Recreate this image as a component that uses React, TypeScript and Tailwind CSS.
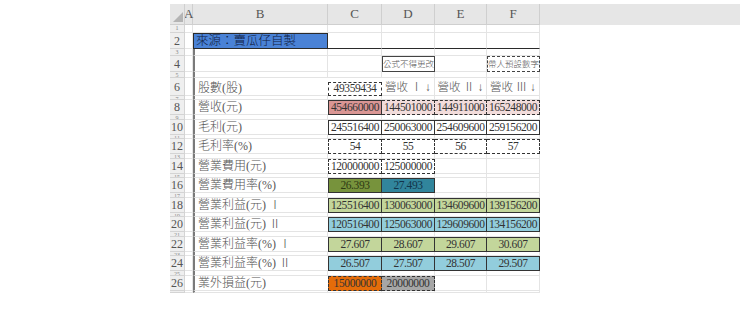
import clsx from "clsx";

type Cell = {
  text: string;
  bg?: string;
  dashed?: boolean;
  color?: string;
};

type DataRow = {
  n: number;
  label: string;
  cells: Cell[];
};

const ROWS: DataRow[] = [
  {
    n: 8,
    label: "營收(元)",
    cells: [
      { text: "454660000", bg: "bg-[#da9694]" },
      { text: "144501000", bg: "bg-[#f2dcdb]", dashed: true },
      { text: "144911000", bg: "bg-[#f2dcdb]", dashed: true },
      { text: "165248000", bg: "bg-[#f2dcdb]", dashed: true },
    ],
  },
  {
    n: 10,
    label: "毛利(元)",
    cells: [
      { text: "245516400" },
      { text: "250063000" },
      { text: "254609600" },
      { text: "259156200" },
    ],
  },
  {
    n: 12,
    label: "毛利率(%)",
    cells: [
      { text: "54", dashed: true },
      { text: "55", dashed: true },
      { text: "56", dashed: true },
      { text: "57", dashed: true },
    ],
  },
  {
    n: 14,
    label: "營業費用(元)",
    cells: [
      { text: "120000000", dashed: true },
      { text: "125000000", dashed: true },
    ],
  },
  {
    n: 16,
    label: "營業費用率(%)",
    cells: [
      { text: "26.393", bg: "bg-[#77933c]", color: "text-[#2e3a14]" },
      { text: "27.493", bg: "bg-[#31859c]", color: "text-[#12344a]" },
    ],
  },
  {
    n: 18,
    label: "營業利益(元) Ⅰ",
    cells: [
      { text: "125516400", bg: "bg-[#c3d69b]" },
      { text: "130063000", bg: "bg-[#c3d69b]" },
      { text: "134609600", bg: "bg-[#c3d69b]" },
      { text: "139156200", bg: "bg-[#c3d69b]" },
    ],
  },
  {
    n: 20,
    label: "營業利益(元) Ⅱ",
    cells: [
      { text: "120516400", bg: "bg-[#92cddc]" },
      { text: "125063000", bg: "bg-[#92cddc]" },
      { text: "129609600", bg: "bg-[#92cddc]" },
      { text: "134156200", bg: "bg-[#92cddc]" },
    ],
  },
  {
    n: 22,
    label: "營業利益率(%) Ⅰ",
    cells: [
      { text: "27.607", bg: "bg-[#c3d69b]" },
      { text: "28.607", bg: "bg-[#c3d69b]" },
      { text: "29.607", bg: "bg-[#c3d69b]" },
      { text: "30.607", bg: "bg-[#c3d69b]" },
    ],
  },
  {
    n: 24,
    label: "營業利益率(%) Ⅱ",
    cells: [
      { text: "26.507", bg: "bg-[#92cddc]" },
      { text: "27.507", bg: "bg-[#92cddc]" },
      { text: "28.507", bg: "bg-[#92cddc]" },
      { text: "29.507", bg: "bg-[#92cddc]" },
    ],
  },
  {
    n: 26,
    label: "業外損益(元)",
    cells: [
      { text: "15000000", bg: "bg-[#e46c0a]", dashed: true },
      { text: "20000000", bg: "bg-[#a6a6a6]", dashed: true },
    ],
  },
];

// odd spacer rows after each data row (alternating 5px / 4px)
const GAP_AFTER: Record<number, string> = {
  8: "h-[5px]",
  10: "h-[4px]",
  12: "h-[5px]",
  14: "h-[4px]",
  16: "h-[5px]",
  18: "h-[4px]",
  20: "h-[5px]",
  22: "h-[4px]",
  24: "h-[5px]",
  26: "h-[2px]",
};

const VALUE_W = ["w-[54px]", "w-[53px]", "w-[52px]", "w-[53px]"];

function RowHead({ n, small }: { n?: number; small?: boolean }) {
  return (
    <div
      className={clsx(
        "flex w-[15px] shrink-0 justify-center overflow-hidden border-r border-b border-[#d4d4d4] bg-[#efefef] leading-none text-[#555]",
        small ? "items-start text-[6px] text-[#888]" : "items-center text-[12px]",
      )}
    >
      {n}
    </div>
  );
}

function Grid({ w, className }: { w: string; className?: string }) {
  return <div className={clsx(w, "shrink-0 border-r border-b border-[#e4e4e4]", className)} />;
}

function Spacer({ n, h }: { n: number; h: string }) {
  return (
    <div className={clsx("flex", h)}>
      <RowHead n={n} small />
      <Grid w="w-[8px]" />
      <Grid w="w-[135px]" className="border-l-2 border-l-[#7a7a7a]" />
      {VALUE_W.map((w, i) => (
        <Grid key={i} w={w} />
      ))}
    </div>
  );
}

function ValueBox({ cell, first, w }: { cell?: Cell; first: boolean; w: string }) {
  if (!cell) return <Grid w={w} />;
  return (
    <div
      className={clsx(
        w,
        "flex shrink-0 items-center justify-center border-y border-r border-[#333] text-[11.5px] leading-none tracking-[-0.4px]",
        first && "border-l",
        cell.dashed && "border-dashed",
        cell.bg ?? "bg-white",
        cell.color ?? "text-[#333]",
      )}
    >
      {cell.text}
    </div>
  );
}

export default function App() {
  return (
    <div className="min-h-[315px] bg-white pt-[4px] pl-[170px] font-['Liberation_Serif','Noto_Sans_CJK_TC',serif] text-[#555]">
      {/* column header */}
      <div className="flex h-[21px] bg-[#e6e6e6] text-[13px] text-[#555]">
        <div className="relative w-[15px] shrink-0 border-r border-b border-[#cfcfcf]">
          <svg className="absolute right-[1px] bottom-[2px]" width="10" height="10" viewBox="0 0 10 10">
            <polygon points="10,0 10,10 0,10" fill="#b4b4b4" />
          </svg>
        </div>
        <div className="flex w-[8px] shrink-0 items-center overflow-visible border-r border-b border-[#cfcfcf]">
          <span className="-ml-[1px]">A</span>
        </div>
        {[
          ["B", "w-[135px]"],
          ["C", "w-[54px]"],
          ["D", "w-[53px]"],
          ["E", "w-[52px]"],
          ["F", "w-[53px]"],
        ].map(([l, w]) => (
          <div
            key={l}
            className={clsx(w, "flex shrink-0 items-center justify-center border-r border-b border-[#cfcfcf]")}
          >
            {l}
          </div>
        ))}
      </div>

      {/* row 1 */}
      <div className="flex h-[8px]">
        <RowHead n={1} small />
        <Grid w="w-[8px]" />
        <Grid w="w-[135px]" />
        {VALUE_W.map((w, i) => (
          <Grid key={i} w={w} />
        ))}
      </div>

      {/* row 2 */}
      <div className="flex h-[16px]">
        <RowHead n={2} />
        <Grid w="w-[8px]" />
        <div className="flex w-[135px] shrink-0 items-center border border-[#2a2a2a] bg-[#4a82d6] pl-[2px] text-[12.5px] leading-none font-light text-[#10203f]">
          來源：賣瓜仔自製
        </div>
        {VALUE_W.map((w, i) => (
          <div key={i} className={clsx(w, "shrink-0 border-r border-r-[#e4e4e4] border-b border-b-[#2a2a2a]")} />
        ))}
      </div>

      <Spacer n={3} h="h-[7px]" />

      {/* row 4 */}
      <div className="flex h-[16px]">
        <RowHead n={4} />
        <Grid w="w-[8px]" />
        <Grid w="w-[135px]" className="border-l-2 border-l-[#7a7a7a]" />
        <Grid w="w-[54px]" />
        <div className="flex w-[53px] shrink-0 items-center justify-center border border-[#444] text-[8.5px] leading-none font-light text-[#555]">
          公式不得更改
        </div>
        <Grid w="w-[52px]" />
        <div className="flex w-[53px] shrink-0 items-center justify-center border border-dashed border-[#444] text-[8.5px] leading-none font-light text-[#555]">
          帶人預設數字
        </div>
      </div>

      <Spacer n={5} h="h-[6px]" />

      {/* row 6 */}
      <div className="flex h-[18px]">
        <RowHead n={6} />
        <Grid w="w-[8px]" />
        <div className="flex w-[135px] shrink-0 items-center border-b border-l-2 border-[#e4e4e4] border-l-[#7a7a7a] pt-[3px] pl-[3px] text-[12px] leading-none font-light">
          股數(股)
        </div>
        <div className="flex w-[54px] shrink-0 items-end">
          <div className="flex h-[14px] w-full items-center justify-center border border-dashed border-[#333] text-[11.5px] leading-none tracking-[-0.4px] text-[#333]">
            49359434
          </div>
        </div>
        {[
          ["營收 Ⅰ ↓", "w-[53px]"],
          ["營收 Ⅱ ↓", "w-[52px]"],
          ["營收 Ⅲ ↓", "w-[53px]"],
        ].map(([t, w]) => (
          <div
            key={t}
            className={clsx(
              w,
              "flex shrink-0 items-center justify-center border-r border-b border-[#e4e4e4] pt-[3px] text-[11.5px] leading-none font-light whitespace-nowrap text-[#555]",
            )}
          >
            {t}
          </div>
        ))}
      </div>

      <Spacer n={7} h="h-[4px]" />

      {ROWS.map((r) => (
        <div key={r.n}>
          <div className="flex h-[15px]">
            <RowHead n={r.n} />
            <Grid w="w-[8px]" />
            <div className="flex w-[135px] shrink-0 items-center border-b border-l-2 border-[#e4e4e4] border-l-[#7a7a7a] pl-[3px] text-[12px] leading-none font-light">
              {r.label}
            </div>
            {VALUE_W.map((w, i) => (
              <ValueBox key={i} w={w} cell={r.cells[i]} first={i === 0} />
            ))}
          </div>
          <Spacer n={r.n + 1} h={GAP_AFTER[r.n]} />
        </div>
      ))}
    </div>
  );
}
